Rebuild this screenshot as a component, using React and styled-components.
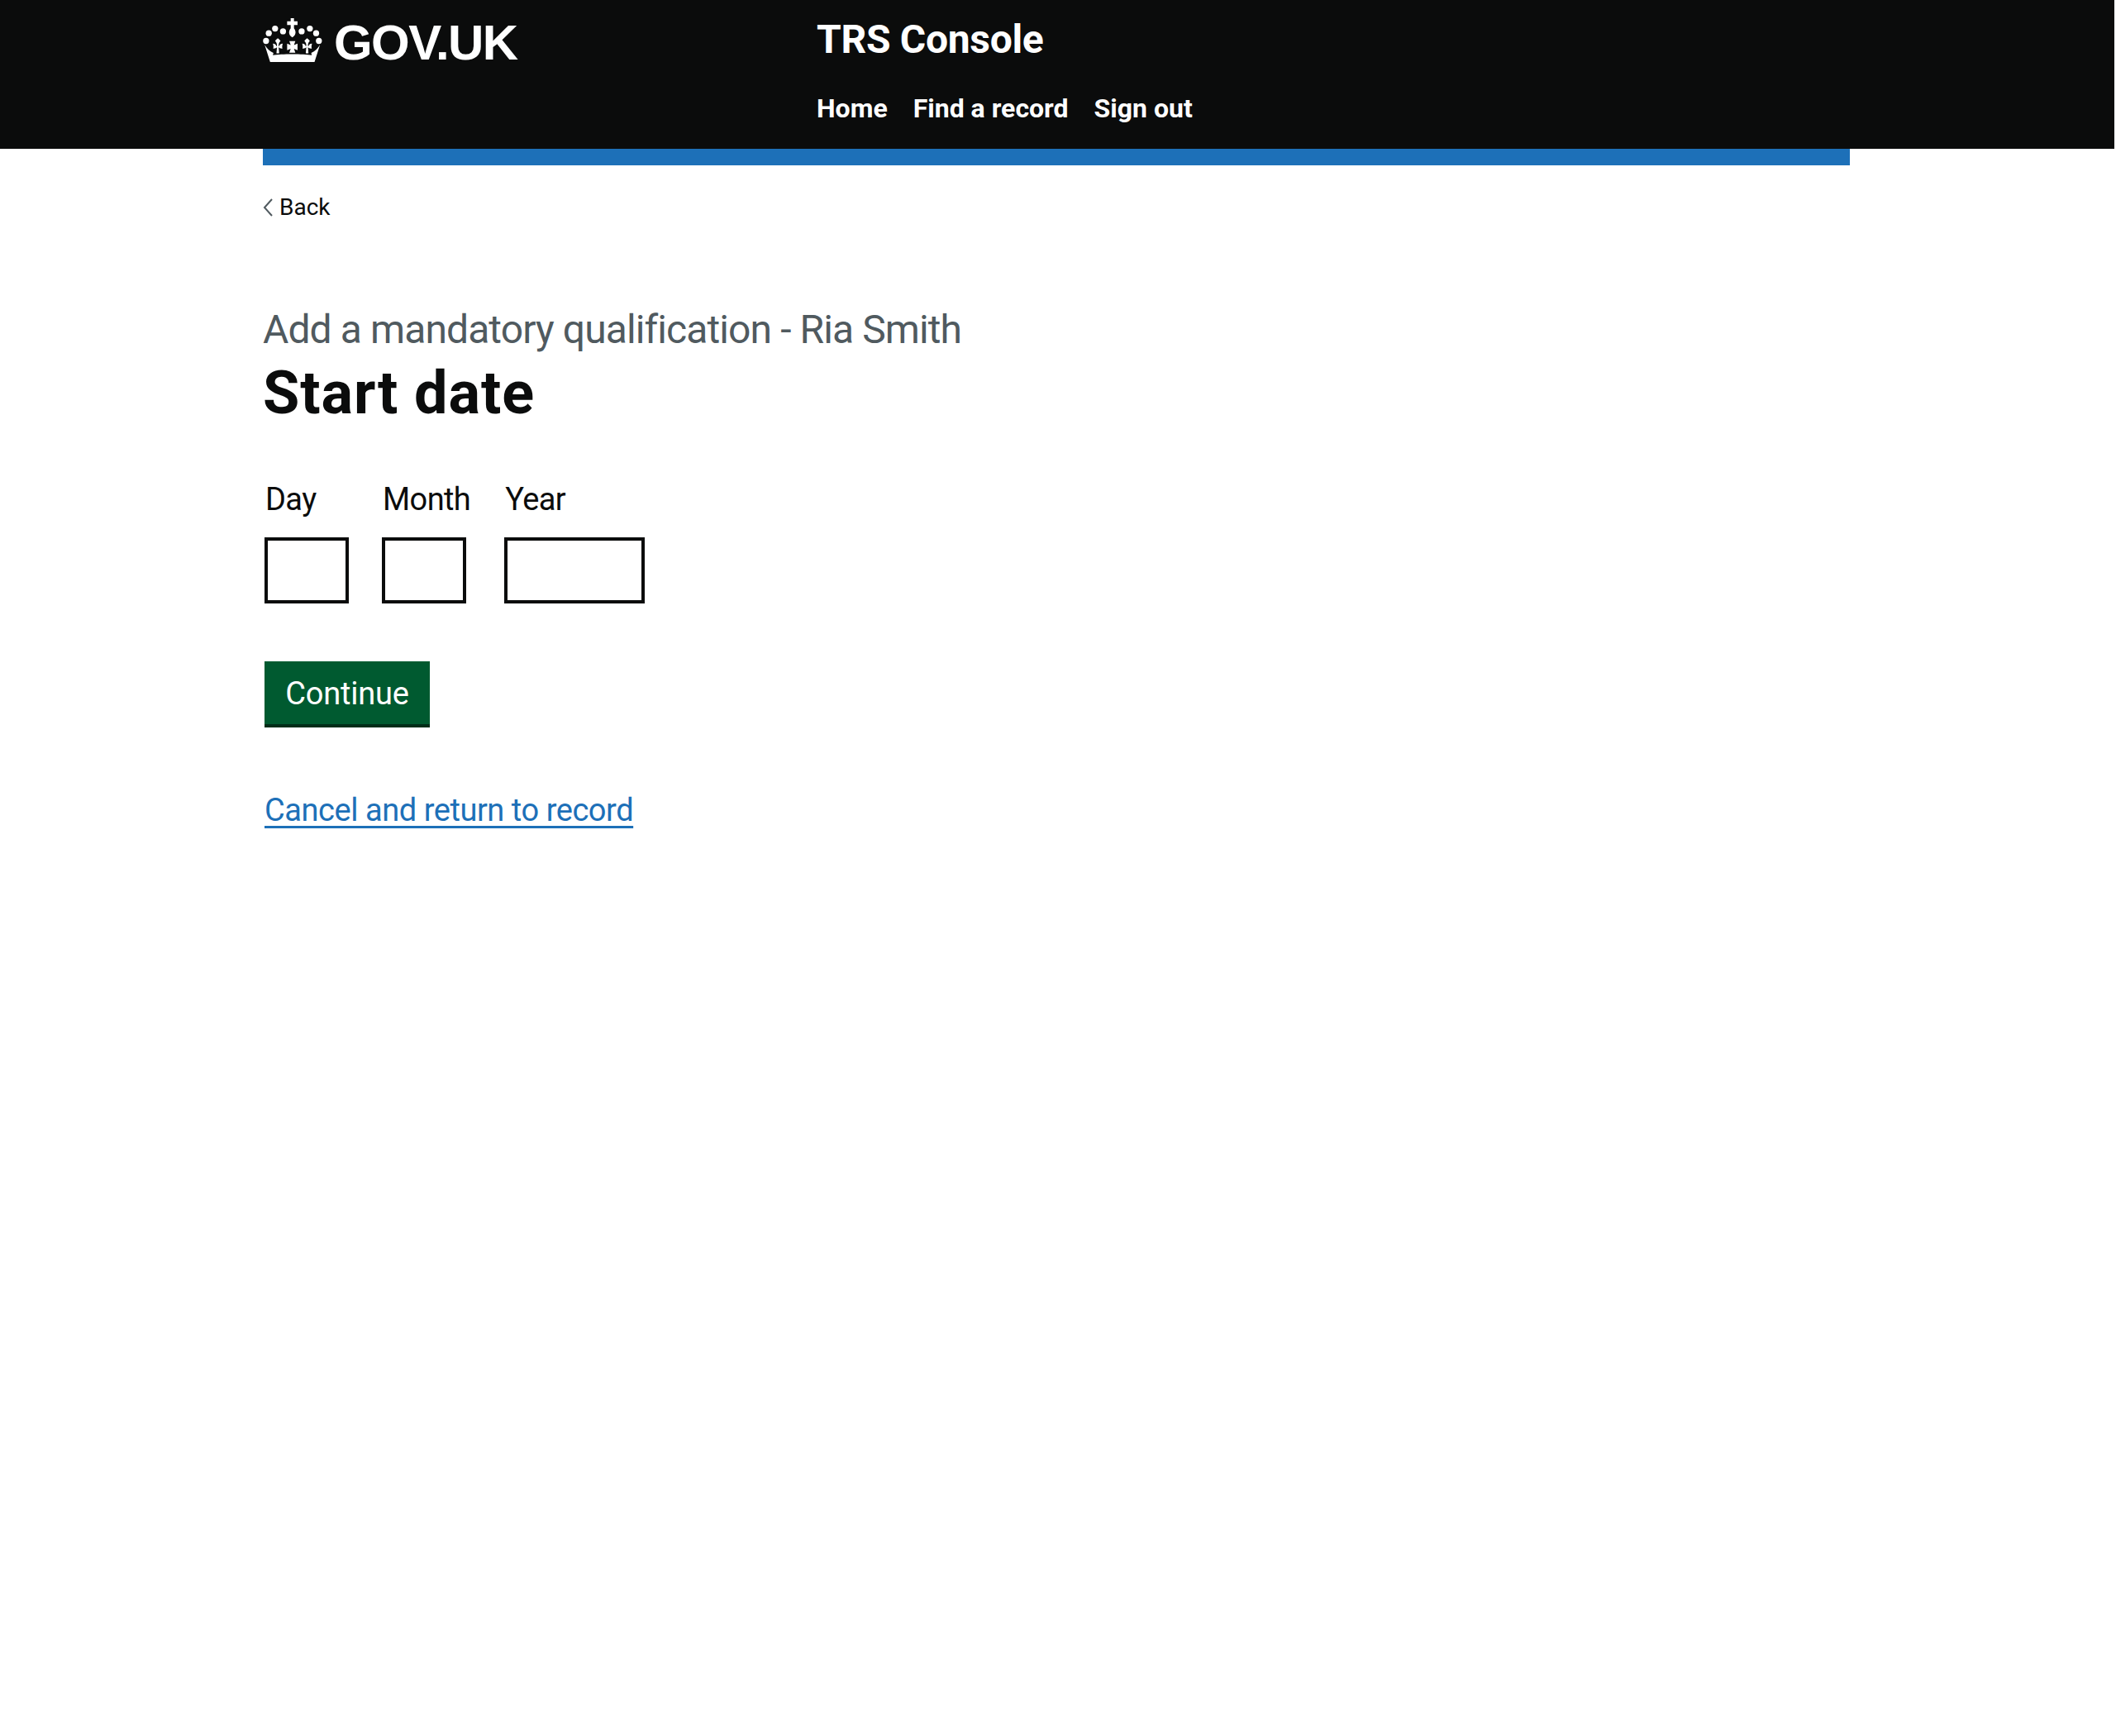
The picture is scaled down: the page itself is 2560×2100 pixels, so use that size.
import React from "react";
import styled, { createGlobalStyle } from "styled-components";

const GlobalStyle = createGlobalStyle`
  body {
    margin: 0;
    background: #fff;
    font-family: Roboto, "Noto Sans", Arial, sans-serif;
    color: #0b0c0c;
  }
`;

const Page = styled.div`
  width: 2558px;
  min-height: 2100px;
`;

const Header = styled.header`
  height: 180px;
  background: #0b0c0c;
  color: #fff;
`;

const HeaderInner = styled.div`
  width: 1920px;
  margin-left: 318px;
  display: flex;
`;

const LogoColumn = styled.div`
  width: 670px;
  padding-top: 22px;
  display: flex;
  align-items: flex-start;
  gap: 14px;
`;

const LogoText = styled.span`
  font-family: "Liberation Sans", Arial, sans-serif;
  font-weight: 700;
  font-size: 60px;
  line-height: 60px;
  letter-spacing: -1.6px;
`;

const ServiceColumn = styled.div`
  display: flex;
  flex-direction: column;
`;

const ServiceName = styled.div`
  font-size: 48px;
  font-weight: 700;
  line-height: 60px;
  letter-spacing: -0.3px;
  margin-top: 18px;
`;

const Nav = styled.nav`
  display: flex;
  gap: 31px;
  margin-top: 33px;
`;

const NavLink = styled.a`
  color: #fff;
  font-size: 32px;
  font-weight: 700;
  line-height: 40px;
  text-decoration: none;
`;

const BlueBar = styled.div`
  width: 1920px;
  height: 20px;
  margin-left: 318px;
  background: #1d70b8;
`;

const Main = styled.main`
  width: 1920px;
  margin-left: 318px;
`;

const BackLink = styled.a`
  display: inline-flex;
  align-items: center;
  gap: 8px;
  margin-top: 33px;
  font-size: 28px;
  line-height: 36px;
  color: #0b0c0c;
  text-decoration: none;
`;

const Content = styled.div`
  padding: 100px 0 0 2px;
`;

const Caption = styled.div`
  margin-left: -2px;
  font-size: 48px;
  line-height: 60px;
  letter-spacing: -0.9px;
  color: #505a5f;
`;

const Title = styled.h1`
  margin: 7px 0 0 -2px;
  font-size: 72px;
  line-height: 80px;
  letter-spacing: 0.9px;
  font-weight: 700;
`;

const DateRow = styled.div`
  display: flex;
  gap: 40px;
  margin-top: 63px;
`;

const DateItem = styled.div`
  display: flex;
  flex-direction: column;
  align-items: flex-start;
`;

const DateLabel = styled.label`
  font-size: 38px;
  line-height: 50px;
  letter-spacing: -0.6px;
  padding: 0 1px;
  margin-bottom: 21px;
`;

const DateInput = styled.input`
  box-sizing: border-box;
  display: block;
  width: ${(p) => p.$width}px;
  height: 80px;
  border: 4px solid #0b0c0c;
  border-radius: 0;
  background: #fff;
  padding: 0;
`;

const Button = styled.button`
  display: block;
  box-sizing: border-box;
  width: 200px;
  height: 80px;
  margin-top: 70px;
  padding: 2px 0 4px;
  border: 0;
  border-radius: 0;
  background: #005a30;
  box-shadow: inset 0 -4px 0 #002d18;
  color: #fff;
  font-family: inherit;
  font-size: 38px;
  letter-spacing: -0.2px;
`;

const CancelLink = styled.a`
  display: inline-block;
  margin-top: 75px;
  font-size: 38px;
  line-height: 50px;
  letter-spacing: -0.45px;
  color: #1d70b8;
  text-decoration: underline;
  text-decoration-thickness: 3px;
  text-underline-offset: 6px;
`;

const FLEUR = "M60 128c8 0 12 5 13 10h1c2-5 1-14-6-20c3-4 6-7 10-10c4 3 7 6 10 10c-7 6-8 15-6 20h1c1-5 5-10 13-10c-2 7-3 12-1 18c-6 1-11-1-14-5l2 22h-10l2-22c-3 4-8 6-14 5c2-6 1-11-1-18z";

function Crown() {
  return (
    <svg width="72" height="53" viewBox="24 35 216 160" fill="#fff" aria-hidden="true">
      <circle cx="35" cy="118" r="11" />
      <circle cx="45" cy="90" r="11" />
      <circle cx="68" cy="73" r="11" />
      <circle cx="97" cy="83" r="11" />
      <circle cx="228" cy="118" r="11" />
      <circle cx="218" cy="90" r="11" />
      <circle cx="195" cy="73" r="11" />
      <circle cx="165" cy="83" r="11" />
      <path d="M125 35h12v11h13v14h-13v12c8 10 9 24 -6 33c-15 -9 -14 -23 -6 -33v-12h-13v-14h13z" />
      <path d="M120 119h22l-5 14l13-5v24l-13-5l5 14h-22l5-14l-13 5v-24l13 5z" />
      <path d={FLEUR} />
      <path d={FLEUR} transform="translate(107 0)" />
      <path d="M30 132c8 12 18 24 32 30l-2 8c30 -5 112 -5 142 0l-2 -8c14 -6 24 -18 32 -30l-20 63h-162z" />
    </svg>
  );
}

function BackChevron() {
  return (
    <svg width="12" height="22" viewBox="0 0 12 22" fill="none" stroke="#505a5f" strokeWidth="2" aria-hidden="true">
      <path d="M11 1L2 11l9 10" />
    </svg>
  );
}

export default function App() {
  return (
    <Page>
      <GlobalStyle />
      <Header>
        <HeaderInner>
          <LogoColumn>
            <Crown />
            <LogoText>GOV.UK</LogoText>
          </LogoColumn>
          <ServiceColumn>
            <ServiceName>TRS Console</ServiceName>
            <Nav>
              <NavLink href="#">Home</NavLink>
              <NavLink href="#">Find a record</NavLink>
              <NavLink href="#">Sign out</NavLink>
            </Nav>
          </ServiceColumn>
        </HeaderInner>
      </Header>
      <BlueBar />
      <Main>
        <BackLink href="#">
          <BackChevron />
          Back
        </BackLink>
        <Content>
          <Caption>Add a mandatory qualification - Ria Smith</Caption>
          <Title>Start date</Title>
          <DateRow>
            <DateItem>
              <DateLabel>Day</DateLabel>
              <DateInput $width={102} />
            </DateItem>
            <DateItem>
              <DateLabel>Month</DateLabel>
              <DateInput $width={102} />
            </DateItem>
            <DateItem>
              <DateLabel>Year</DateLabel>
              <DateInput $width={170} />
            </DateItem>
          </DateRow>
          <Button>Continue</Button>
          <CancelLink href="#">Cancel and return to record</CancelLink>
        </Content>
      </Main>
    </Page>
  );
}
